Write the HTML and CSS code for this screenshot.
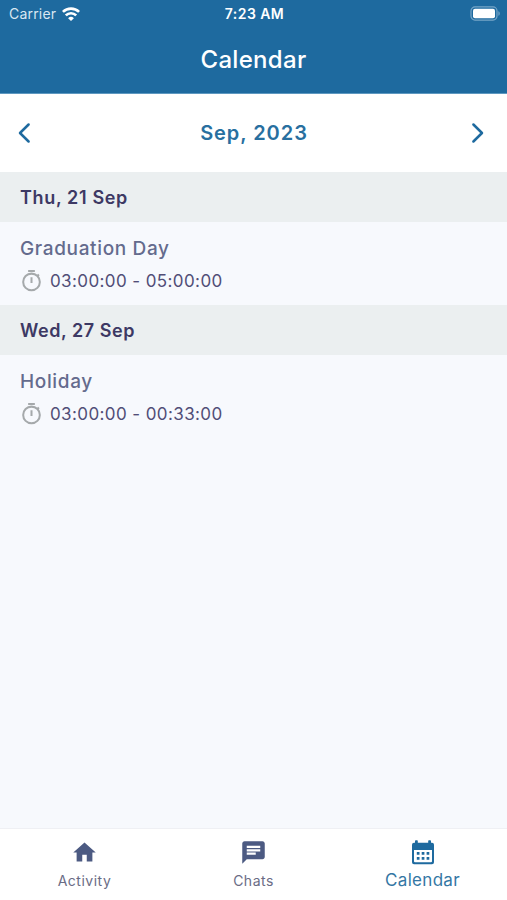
FILE: index.html
```html
<!DOCTYPE html>
<html lang="en">
<head>
<meta charset="utf-8">
<title>Calendar</title>
<link rel="stylesheet" href="styles.css">
</head>
<body>
<div class="screen">
  <header class="header">
    <div class="status">
      <div class="status-left">
        <span class="carrier">Carrier</span>
        <svg class="wifi" width="18" height="14" viewBox="0 0 18 14" fill="none" stroke="#fff" stroke-width="2.7">
          <path d="M.9 4.900a11.600 11.600 0 0 1 16.200 0M3.800 8.400a7.400 7.400 0 0 1 10.400 0"/>
          <path d="M9 14 6.100 11.200a4.200 4.200 0 0 1 5.800 0z" fill="#fff" stroke="none"/>
        </svg>
      </div>
      <span class="clock">7:23 AM</span>
      <svg class="battery" width="31" height="15" viewBox="0 0 31 15">
        <rect x="1" y=".9" width="26" height="13.2" rx="4" fill="none" stroke="#77a6c8" stroke-width="1.2"/>
        <rect x="3" y="2.8" width="22" height="9.4" rx="2" fill="#fff"/>
        <path d="M28.4 5.2c1.8.7 1.8 3.9 0 4.6z" fill="#77a6c8"/>
      </svg>
    </div>
    <h1 class="title">Calendar</h1>
  </header>
  <nav class="month">
    <svg width="14" height="22" viewBox="0 0 14 22"><path d="M11.600 2.500 3 11l8.600 8.500"/></svg>
    <span class="month-name">Sep, 2023</span>
    <svg width="14" height="22" viewBox="0 0 14 22"><path d="M2.400 2.500 11 11l-8.600 8.500"/></svg>
  </nav>
  <main class="events">
    <section>
      <h2 class="day">Thu, 21 Sep</h2>
      <div class="event">
        <span class="name">Graduation Day</span>
        <div class="time">
          <svg class="timer" viewBox="0 0 24 24"><circle cx="12" cy="13" r="8.700"/><path d="M8.500 1.600h7M12 8v6M18 7l1.700-1.700"/></svg>
          <span>03:00:00 - 05:00:00</span>
        </div>
      </div>
    </section>
    <section>
      <h2 class="day day-wide">Wed, 27 Sep</h2>
      <div class="event">
        <span class="name">Holiday</span>
        <div class="time">
          <svg class="timer" viewBox="0 0 24 24"><circle cx="12" cy="13" r="8.700"/><path d="M8.500 1.600h7M12 8v6M18 7l1.700-1.700"/></svg>
          <span>03:00:00 - 00:33:00</span>
        </div>
      </div>
    </section>
  </main>
  <footer class="tabs">
    <div class="tab">
      <svg class="tab-icon" viewBox="0 0 24 24"><path d="M10 20v-6h4v6h5v-8h3L12 3 2 12h3v8z"/></svg>
      <span>Activity</span>
    </div>
    <div class="tab">
      <svg class="tab-icon" viewBox="0 0 24 24"><path d="M20 2H4c-1.100 0-1.990.9-1.990 2L2 22l4-4h14c1.100 0 2-.9 2-2V4c0-1.100-.9-2-2-2zM6 9h12v2H6V9zm8 5H6v-2h8v2zm4-6H6V6h12v2z"/></svg>
      <span>Chats</span>
    </div>
    <div class="tab active">
      <svg class="tab-icon" viewBox="0 0 26 26"><path fill-rule="evenodd" d="M5 2q0-.8.800-.8h1.200q.8 0 .8.800V3.700h10.400V2q0-.8.800-.8h1.200q.8 0 .8.800v1.700h1q2 0 2 2v17.500q0 2-2 2H4q-2 0-2-2v-17.500q0-2 2-2h1zM4 11v11.200q0 1 1 1h16q1 0 1-1V11z"/><path d="M6.800 13h2.700v2.700H6.800zm4.900 0h2.700v2.700h-2.700zm4.900 0h2.700v2.700h-2.700zm-9.800 5h2.700v2.700H6.800zm4.900 0h2.700v2.700h-2.700zm4.900 0h2.700v2.700h-2.700z"/></svg>
      <span>Calendar</span>
    </div>
  </footer>
</div>
</body>
</html>
```
FILE: styles.css
```css
* { box-sizing: border-box; }
body { margin: 0; font-family: Inter, "Liberation Sans", sans-serif; background: #f7f9fd; }
svg { display: block; flex: none; }
.screen { height: 900px; display: flex; flex-direction: column; background: #f7f9fd; }
.header { height: 94px; background: #1e6a9f; color: #fff; border-bottom: 1px solid #5e98c0; }
.status { height: 27px; display: grid; grid-template-columns: 1fr auto 1fr; align-items: center; padding: 0 6px 0 9px; }
.status-left { display: flex; align-items: center; gap: 6px; }
.carrier { font-size: 14px; letter-spacing: .2px; color: #d9e7f2; }
.clock { font-size: 14px; font-weight: 600; letter-spacing: .45px; margin-left: -1px; }
.battery { justify-self: end; }
.title { margin: 0; height: 65px; display: flex; align-items: center; justify-content: center; font-size: 24px; font-weight: 500; letter-spacing: .3px; }
.month { height: 78px; background: #fff; display: flex; align-items: center; justify-content: space-between; padding: 0 22px 0 17px; }
.month svg { fill: none; stroke: #1e6a9f; stroke-width: 2.5; stroke-linecap: round; stroke-linejoin: round; }
.month-name { padding-left: 6px; font-size: 20px; font-weight: 600; letter-spacing: .95px; color: #286f9f; }
.events { flex: 1; }
.day { margin: 0; height: 50px; padding: 0 20px; display: flex; align-items: center; background: #ebeff0; color: #3d3964; font-size: 18px; font-weight: 600; letter-spacing: .65px; }
.day-wide { letter-spacing: .55px; }
.event { height: 83px; padding: 15px 20px 0; }
.name { display: block; width: max-content; font-size: 19px; line-height: 24px; font-weight: 500; letter-spacing: .65px; color: #646b8d; }
.time { display: flex; align-items: center; gap: 7px; height: 24px; margin-top: 8px; font-size: 17px; letter-spacing: .4px; color: #514e77; }
.timer { width: 23px; height: 24px; fill: none; stroke: #a5a9ab; stroke-width: 2.1; }
.tabs { height: 72px; background: #fff; border-top: 1px solid #eff0f4; display: grid; grid-template-columns: repeat(3, 1fr); }
.tab { display: flex; flex-direction: column; align-items: center; padding-top: 10px; font-size: 14px; line-height: 20px; letter-spacing: .5px; color: #6a6c85; }
.tab-icon { width: 27px; height: 27px; margin-bottom: 5px; fill: #4c5a82; }
.active { font-size: 17px; letter-spacing: .3px; color: #3477a4; }
.active .tab-icon { width: 26px; height: 26px; fill: #1e6a9f; }
```
